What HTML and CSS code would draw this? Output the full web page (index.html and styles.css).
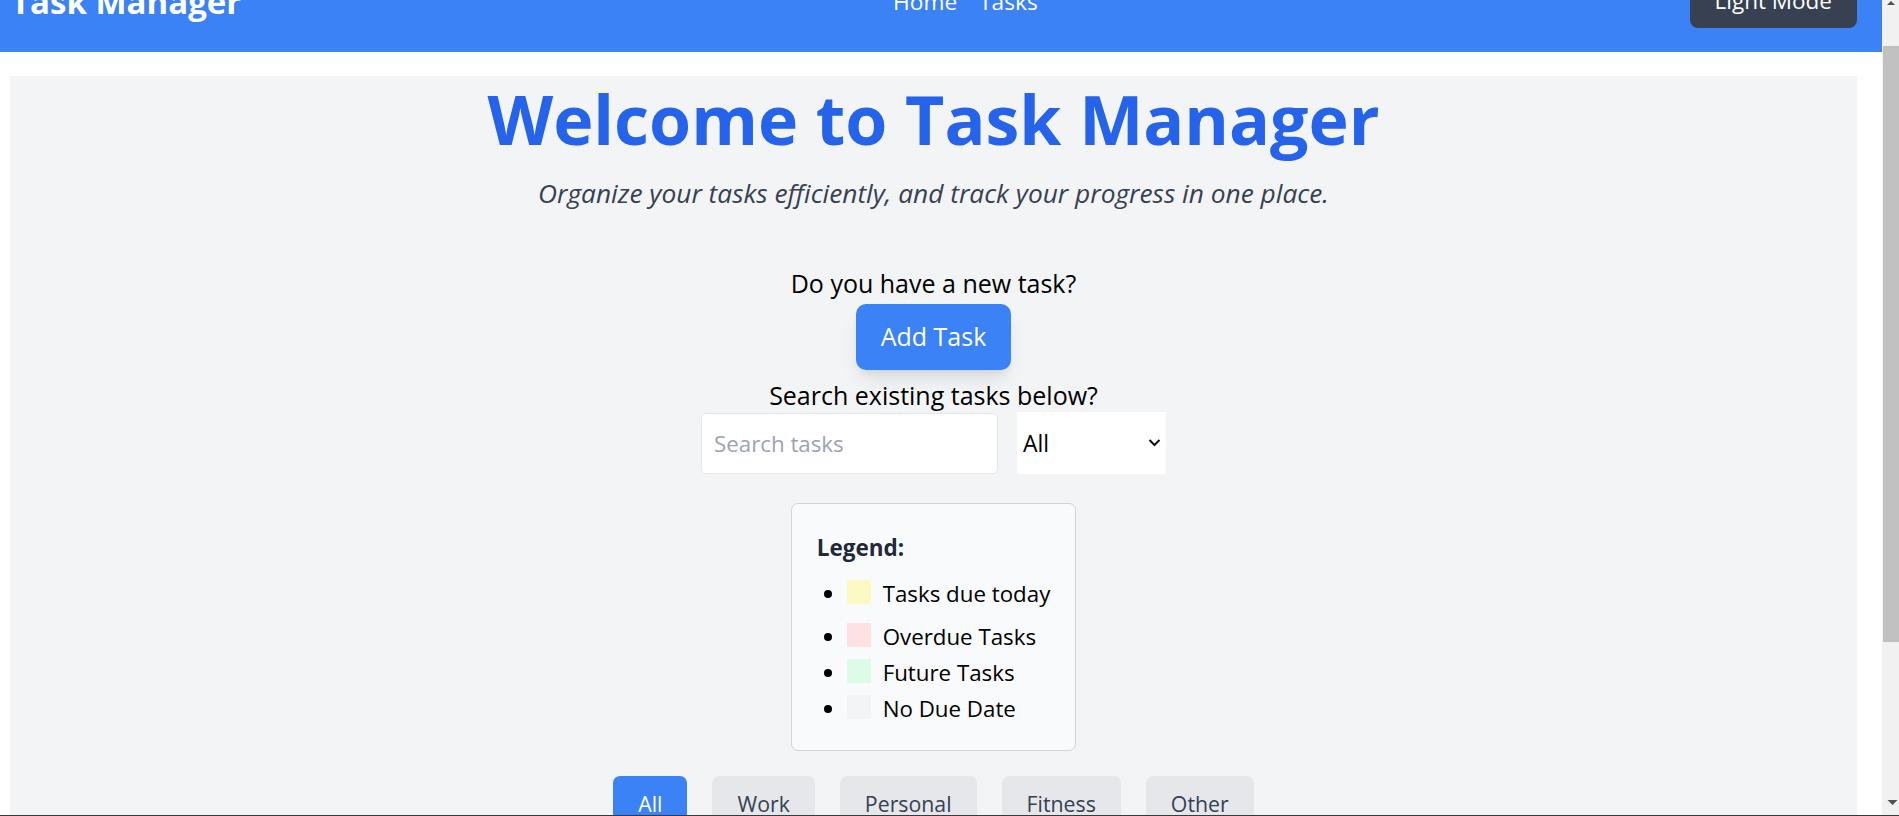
FILE: index.html
```html
<!DOCTYPE html>
<html lang="en">
<head>
<meta charset="utf-8">
<title>Task Manager</title>
<link rel="stylesheet" href="styles.css">
</head>
<body>
<nav class="navbar">
  <div class="brand">Task Manager</div>
  <div class="nav-links">
    <a class="nav-link" href="#">Home</a>
    <a class="nav-link" href="#">Tasks</a>
  </div>
  <button class="theme-btn" type="button">Light Mode</button>
</nav>

<main class="main">
  <h1 class="title">Welcome to Task Manager</h1>
  <p class="subtitle">Organize your tasks efficiently, and track your progress in one place.</p>

  <section class="actions">
    <p class="prompt prompt-new">Do you have a new task?</p>
    <button class="add-btn" type="button">Add Task</button>
    <p class="prompt prompt-search">Search existing tasks below?</p>
    <div class="search-row">
      <input class="search" type="text" placeholder="Search tasks">
      <div class="select-wrap">
        <select class="status">
          <option>All</option>
          <option>Completed</option>
          <option>Pending</option>
        </select>
        <svg class="chevron" width="13" height="9" viewBox="0 0 13 9"><path d="M1.5 2 L6.5 7 L11.5 2" fill="none" stroke="#111" stroke-width="2"/></svg>
      </div>
    </div>
  </section>

  <div class="legend">
    <div class="legend-title">Legend:</div>
    <ul class="legend-list">
      <li class="legend-item"><span class="swatch swatch-today"></span>Tasks due today</li>
      <li class="legend-item"><span class="swatch swatch-overdue"></span>Overdue Tasks</li>
      <li class="legend-item"><span class="swatch swatch-future"></span>Future Tasks</li>
      <li class="legend-item"><span class="swatch swatch-none"></span>No Due Date</li>
    </ul>
  </div>

  <div class="tabs">
    <button class="tab tab-active" type="button">All</button>
    <button class="tab" type="button">Work</button>
    <button class="tab" type="button">Personal</button>
    <button class="tab" type="button">Fitness</button>
    <button class="tab" type="button">Other</button>
  </div>

  <div class="task-list"></div>
</main>

<div class="scrollbar" aria-hidden="true">
  <svg class="sb-arrow sb-up" width="17" height="17" viewBox="0 0 17 17"><path d="M5 5 L9 1 L13 5 Z" fill="#505050"/></svg>
  <div class="sb-thumb"></div>
  <svg class="sb-arrow sb-down" width="17" height="17" viewBox="0 0 17 17"><path d="M5.5 0 L10.5 5 L15.5 0 Z" fill="#505050"/></svg>
</div>
<div class="frame-line"></div>
<script src="script.js"></script>
</body>
</html>
```

FILE: styles.css
```css
body {
  margin: 0 17px 0 0;
  font-family: "Open Sans", "Noto Sans", "Liberation Sans", sans-serif;
  background: #ffffff;
  color: #000000;
}

/* ---------- Navbar ---------- */
.navbar {
  display: flex;
  justify-content: space-between;
  align-items: center;
  height: 92px;
  padding: 0 25px 8px 11px;
  background: #3b82f6;
  color: #ffffff;
  box-sizing: border-box;
}
.brand {
  font-size: 33px;
  font-weight: 700;
  line-height: 40px;
}
.nav-links {
  display: flex;
  gap: 22px;
}
.nav-link {
  color: #ffffff;
  text-decoration: none;
  font-size: 22.7px;
  line-height: 30px;
}
.theme-btn {
  font-family: inherit;
  font-size: 22.5px;
  line-height: 30px;
  color: #ffffff;
  background: #374151;
  border: none;
  border-radius: 8px;
  padding: 10px 25px 12px;
}

/* ---------- Main ---------- */
.main {
  margin: 24px 25px 0 10px;
  padding-top: 9px;
  background: #f3f4f6;
  text-align: center;
}
.title {
  margin: 0;
  font-size: 68px;
  line-height: 68px;
  font-weight: 700;
  color: #2563eb;
}
.subtitle {
  margin: 23px 0 0;
  font-size: 26.3px;
  line-height: 34px;
  font-style: italic;
  color: #374151;
}

.actions {
  display: flex;
  flex-direction: column;
  align-items: center;
  margin-top: 57px;
}
.prompt {
  margin: 0;
  font-size: 25px;
  line-height: 33px;
}
.prompt-new {
  margin-bottom: 4px;
}
.prompt-search {
  margin-top: 9px;
}
.add-btn {
  font-family: inherit;
  font-size: 25px;
  line-height: 35px;
  color: #ffffff;
  background: #3b82f6;
  border: none;
  border-radius: 10px;
  padding: 15px 25px 16px;
  box-shadow: 0 12px 19px -4px rgba(0, 0, 0, 0.1), 0 5px 8px -5px rgba(0, 0, 0, 0.1);
}

.search-row {
  display: flex;
  align-items: center;
  gap: 19px;
  margin-top: 0;
}
.search {
  box-sizing: border-box;
  width: 297px;
  height: 61px;
  padding: 0 12px;
  border: 1px solid #e5e7eb;
  border-radius: 5px;
  background: #ffffff;
  font-family: inherit;
  font-size: 22.3px;
  color: #111827;
}
.search::placeholder {
  color: #9ca3af;
}
.select-wrap {
  position: relative;
  width: 149px;
  height: 62px;
}
.status {
  appearance: none;
  -webkit-appearance: none;
  box-sizing: border-box;
  width: 100%;
  height: 100%;
  padding: 0 6px;
  border: none;
  border-radius: 0;
  background: #ffffff;
  font-family: inherit;
  font-size: 23px;
  color: #000000;
}
.chevron {
  position: absolute;
  right: 5px;
  top: 26px;
  pointer-events: none;
}

/* ---------- Legend ---------- */
.legend {
  width: fit-content;
  margin: 29px auto 0;
  padding: 26px 25px 23px;
  background: #f9fafb;
  border: 1px solid #d4d4d8;
  border-radius: 7px;
  text-align: left;
}
.legend-title {
  font-size: 22.5px;
  line-height: 35px;
  font-weight: 700;
  color: #1f2937;
}
.legend-list {
  margin: 11px 0 0;
  padding-left: 30px;
  list-style: disc;
}
.legend-item {
  font-size: 22.3px;
  line-height: 36px;
  color: #000000;
}
.legend-item:first-child {
  margin-bottom: 7px;
}
.swatch {
  display: inline-block;
  width: 24px;
  height: 24px;
  margin-right: 12px;
  vertical-align: -2px;
}
.swatch-today { background: #fef9c3; }
.swatch-overdue { background: #fee2e2; }
.swatch-future { background: #dcfce7; }
.swatch-none { background: #f3f4f6; }

/* ---------- Tabs ---------- */
.tabs {
  display: flex;
  justify-content: center;
  gap: 25px;
  margin-top: 25px;
}
.tab {
  font-family: inherit;
  font-size: 21.3px;
  line-height: 35px;
  padding: 10px 25px;
  border: none;
  border-radius: 7px;
  background: #e5e7eb;
  color: #374151;
}
.tab-active {
  background: #3b82f6;
  color: #ffffff;
}

.task-list {
  height: 200px;
}

/* ---------- Window chrome overlays ---------- */
.scrollbar {
  position: fixed;
  top: 0;
  right: 0;
  width: 17px;
  height: 100%;
  background: #f1f1f1;
}
.sb-arrow {
  position: absolute;
  left: 0;
  display: block;
}
.sb-up {
  top: 0;
}
.sb-down {
  top: 800px;
}
.sb-thumb {
  position: absolute;
  top: 46px;
  left: 1px;
  right: 0;
  height: 596px;
  background: #c1c1c1;
}

.frame-line {
  position: fixed;
  left: 0;
  right: 0;
  bottom: 0;
  height: 1px;
  background: #3a3a3a;
}
```

FILE: script.js
```js
window.scrollTo(0, 40);
window.addEventListener('load', function () {
  window.scrollTo(0, 40);
});
```
